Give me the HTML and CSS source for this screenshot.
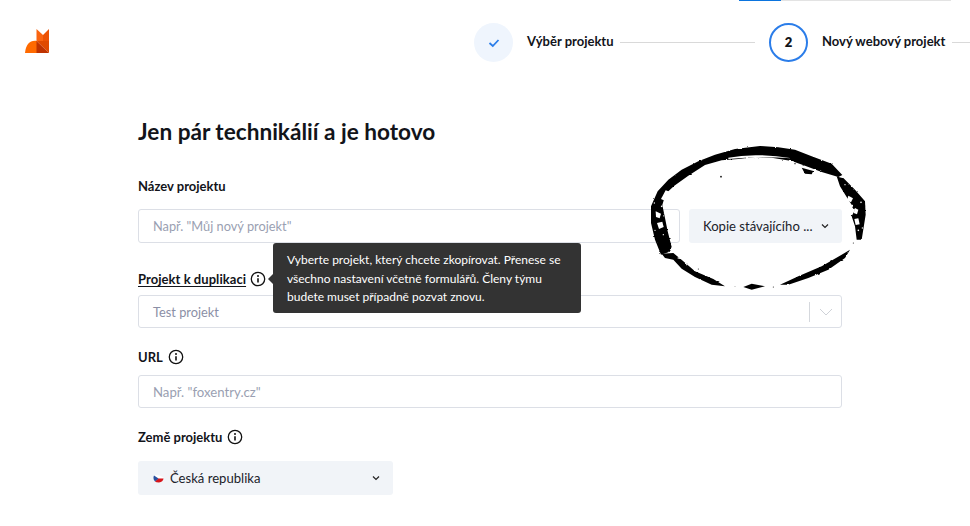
FILE: index.html
```html
<!DOCTYPE html>
<html lang="cs">
<head>
<meta charset="utf-8">
<title>Nový webový projekt</title>
<link rel="stylesheet" href="styles.css">
</head>
<body>
<div class="progress"><span class="progress-fill"></span><span class="progress-rest"></span></div>
<header class="header">
  <svg class="logo" width="25" height="25" viewBox="0 0 25 25">
    <path d="M0 24 C1 15 5 11 12 12 V24 Z" fill="#ff6a00"/>
    <path d="M11.5 0 L18 6 V12 H11.5 Z" fill="#fa6410"/>
    <path d="M18 6 L24 0 V12 H18 Z" fill="#ec5205"/>
    <path d="M11.5 12 H24 V24 Z" fill="#e04a00"/>
    <path d="M11.5 12 L24 24 H11.5 Z" fill="#bf3300"/>
  </svg>
  <div class="steps">
    <div class="step-circle step-done">
      <svg width="12" height="10" viewBox="0 0 12 10"><path d="M1.5 5 L4.8 8 L10.5 2" fill="none" stroke="#2b7de9" stroke-width="1.8"/></svg>
    </div>
    <span class="step-label step-label-first">Výběr projektu</span>
    <span class="step-line step-line-first"></span>
    <div class="step-circle step-active">2</div>
    <span class="step-label step-label-second">Nový webový projekt</span>
    <span class="step-line step-line-last"></span>
  </div>
</header>
<main class="form">
  <h1 class="title">Jen pár technikálií a je hotovo</h1>
  <div class="label label-first">Název projektu</div>
  <div class="row">
    <div class="input input-grow">Např. "Můj nový projekt"</div>
    <div class="drop drop-copy"><span>Kopie stávajícího ...</span>
      <svg class="chev" width="8" height="6" viewBox="0 0 8 6"><path d="M1 1.5 L4 4.5 L7 1.5" fill="none" stroke="#222" stroke-width="1.2"/></svg>
    </div>
  </div>
  <div class="label label-dup"><span class="underlined">Projekt k duplikaci</span>
    <svg class="info" width="16" height="16" viewBox="0 0 16 16"><circle cx="8" cy="8" r="6.7" fill="none" stroke="#111" stroke-width="1.3"/><path d="M8 7.2 V11.4" stroke="#111" stroke-width="1.6"/><circle cx="8" cy="4.9" r="1" fill="#111"/></svg>
  </div>
  <div class="input input-select"><span>Test projekt</span>
    <span class="select-end"><svg width="14" height="8" viewBox="0 0 14 8"><path d="M1 1 L7 7 L13 1" fill="none" stroke="#cfd2d8" stroke-width="1"/></svg></span>
  </div>
  <div class="label label-url">URL
    <svg class="info" width="16" height="16" viewBox="0 0 16 16"><circle cx="8" cy="8" r="6.7" fill="none" stroke="#111" stroke-width="1.3"/><path d="M8 7.2 V11.4" stroke="#111" stroke-width="1.6"/><circle cx="8" cy="4.9" r="1" fill="#111"/></svg>
  </div>
  <div class="input input-url">Např. "foxentry.cz"</div>
  <div class="label label-country">Země projektu
    <svg class="info" width="16" height="16" viewBox="0 0 16 16"><circle cx="8" cy="8" r="6.7" fill="none" stroke="#111" stroke-width="1.3"/><path d="M8 7.2 V11.4" stroke="#111" stroke-width="1.6"/><circle cx="8" cy="4.9" r="1" fill="#111"/></svg>
  </div>
  <div class="drop drop-country">
    <span class="country">
      <svg class="flag" width="11" height="9" viewBox="0 0 11 9"><path d="M1 1.5 Q5 0 10.5 3.5 V4.5 H5 Z" fill="#fff"/><path d="M5 4.5 H10.5 Q10 8 6 8.5 Q3 8.5 2 7.5 Z" fill="#d7141a"/><path d="M1 1.5 Q-.5 5 2 7.5 L5.5 4.5 Z" fill="#2a4f9e"/></svg>
      Česká republika
    </span>
    <svg class="chev" width="8" height="6" viewBox="0 0 8 6"><path d="M1 1.5 L4 4.5 L7 1.5" fill="none" stroke="#222" stroke-width="1.2"/></svg>
  </div>
</main>
<div class="tooltip">Vyberte projekt, který chcete zkopírovat. Přenese se všechno nastavení včetně formulářů. Členy týmu budete muset případně pozvat znovu.</div>
<svg class="ink" width="230" height="150" viewBox="0 0 690 450">
  <defs>
    <filter id="rough" x="-5%" y="-5%" width="110%" height="110%" filterUnits="objectBoundingBox">
      <feTurbulence type="fractalNoise" baseFrequency="0.06 0.14" numOctaves="2" seed="4" result="n"/>
      <feDisplacementMap in="SourceGraphic" in2="n" scale="6" xChannelSelector="R" yChannelSelector="G"/>
    </filter>
  </defs>
  <g filter="url(#rough)">
    <path fill="#000" d="M48 335 L30 290 L18 240 L18 190 L38 145 L70 110 L110 80 L160 55 L210 35 L270 18 L345 9 L400 13 L450 20 L500 40 L560 62 L592 96 L580 102 L530 87 L480 68 L440 54 L380 44 L330 42 L280 48 L230 52 L180 66 L130 98 L88 128 L62 152 L52 186 L60 225 L68 265 L80 312 L70 328 Z"/>
    <path fill="#000" d="M575 100 L595 105 L630 140 L660 175 L662 215 L650 290 L635 290 L630 250 L620 220 L630 200 L610 170 L585 130 Z"/>
    <path fill="#000" d="M50 332 L85 330 L115 355 L150 385 L205 408 L240 430 L200 425 L150 402 L110 377 L85 350 L60 345 Z"/>
    <path fill="#000" d="M295 432 L320 422 L360 430 L320 440 Z"/>
    <path fill="#000" d="M405 425 L460 400 L530 370 L590 335 L615 320 L600 345 L550 380 L490 405 L430 425 Z"/>
    <path fill="#000" d="M470 74 L505 84 L500 94 L480 92 Z"/>
  </g>
  <g fill="#fff">
    <path d="M250 44 Q330 28 440 46 Q340 38 250 48 Z"/>
    <path d="M62 142 L74 146 L56 172 L48 168 Z"/>
    <path d="M32 205 L48 212 L44 226 L33 222 Z"/>
    <path d="M36 240 L52 236 L56 252 L42 258 Z"/>
    <circle cx="28" cy="180" r="2"/><circle cx="50" cy="190" r="2.5"/><circle cx="30" cy="262" r="2"/><circle cx="55" cy="275" r="2"/>
    <path d="M610 158 L624 166 L618 178 L606 172 Z"/>
    <path d="M630 195 L640 200 L636 214 L626 210 Z"/>
    <path d="M628 228 L640 226 L644 244 L632 246 Z"/>
    <circle cx="648" cy="178" r="2.5"/><circle cx="640" cy="262" r="2.5"/><circle cx="600" cy="125" r="2"/><circle cx="652" cy="255" r="2"/>
    <circle cx="125" cy="365" r="2"/><circle cx="100" cy="345" r="2.5"/>
  </g>
  <g fill="#000">
    <circle cx="228" cy="101" r="2.5"/><circle cx="625" cy="300" r="1.5"/><circle cx="130" cy="372" r="2"/><circle cx="385" cy="432" r="1.5"/><circle cx="270" cy="430" r="1"/>
    <circle cx="450" cy="62" r="2"/><circle cx="160" cy="378" r="1.5"/>
  </g>
</svg>
</body>
</html>
```
FILE: styles.css
```css
* { box-sizing: border-box; }
html, body { margin: 0; padding: 0; }
body { width: 970px; height: 526px; overflow: hidden; position: relative; background: #fff; color: #12141a; font-family: "Lato", "Open Sans", sans-serif; }
.progress { display: flex; height: 1px; margin-left: 739px; width: 212px; }
.progress-fill { width: 42px; background: #0b74de; }
.progress-rest { flex: 1; background: #e3e3e3; }
.header { display: flex; height: 79px; padding-left: 25px; }
.logo { margin-top: 28px; }
.steps { display: flex; align-items: center; margin-left: 424px; height: 39px; margin-top: 22px; flex: 1; }
.step-circle { width: 39px; height: 39px; border-radius: 50%; display: flex; align-items: center; justify-content: center; flex: none; }
.step-done { background: #eff5fd; }
.step-active { border: 2px solid #2b7de9; font-size: 13px; font-weight: 800; margin-left: 14px; padding-bottom: 2px; }
.step-label { font-size: 13px; font-weight: 700; white-space: nowrap; line-height: 15px; padding-bottom: 2px; }
.step-label-first { margin-left: 14px; width: 93px; }
.step-label-second { margin-left: 14px; width: 130px; }
.step-line { height: 1px; background: #d9d9d9; }
.step-line-first { width: 135px; }
.step-line-last { width: 18px; }
.form { width: 704px; margin-left: 138px; }
.title { font-size: 22.6px; font-weight: 700; margin: 0; line-height: 28px; padding-top: 38px; }
.label { font-size: 13px; font-weight: 700; line-height: 16px; display: flex; align-items: center; gap: 5px; }
.label-first { margin-top: 32px; margin-bottom: 15px; }
.label-dup { margin-top: 28px; margin-bottom: 8px; gap: 4px; }
.label-url { margin-top: 21px; margin-bottom: 10px; }
.label-country { margin-top: 21px; margin-bottom: 16px; }
.underlined { text-decoration: underline; text-underline-offset: 2px; letter-spacing: .05px; }
.row { display: flex; gap: 9px; }
.input { height: 33px; border: 1px solid #dcdfe6; border-radius: 3px; padding-left: 14px; font-size: 12.8px; color: #9a9fb2; display: flex; align-items: center; }
.input-grow { flex: 1; height: 34px; }
.input-select { justify-content: space-between; color: #8b8fa6; }
.input-url { font-size: 13.2px; }
.select-end { height: 20px; width: 32px; border-left: 1px solid #d5d8dd; display: flex; align-items: center; justify-content: center; }
.drop { height: 34px; background: #f1f4f8; border-radius: 3px; display: flex; align-items: center; justify-content: space-between; font-size: 13.1px; color: #20222a; }
.drop-copy { width: 153px; padding: 0 13px 0 14px; flex: none; }
.drop-country { width: 255px; padding: 0 13px 0 15px; }
.country { display: flex; align-items: center; gap: 6px; }
.tooltip { position: absolute; left: 273px; top: 243px; width: 308px; height: 70px; padding: 8px 14px; background: #333; border-radius: 3px; color: #fff; font-size: 12px; line-height: 18.5px; }
.tooltip::before { content: ""; position: absolute; left: -5px; top: 31px; border: 5px solid transparent; border-left: 0; border-right-color: #333; }
.ink { position: absolute; left: 645px; top: 143px; }
```
